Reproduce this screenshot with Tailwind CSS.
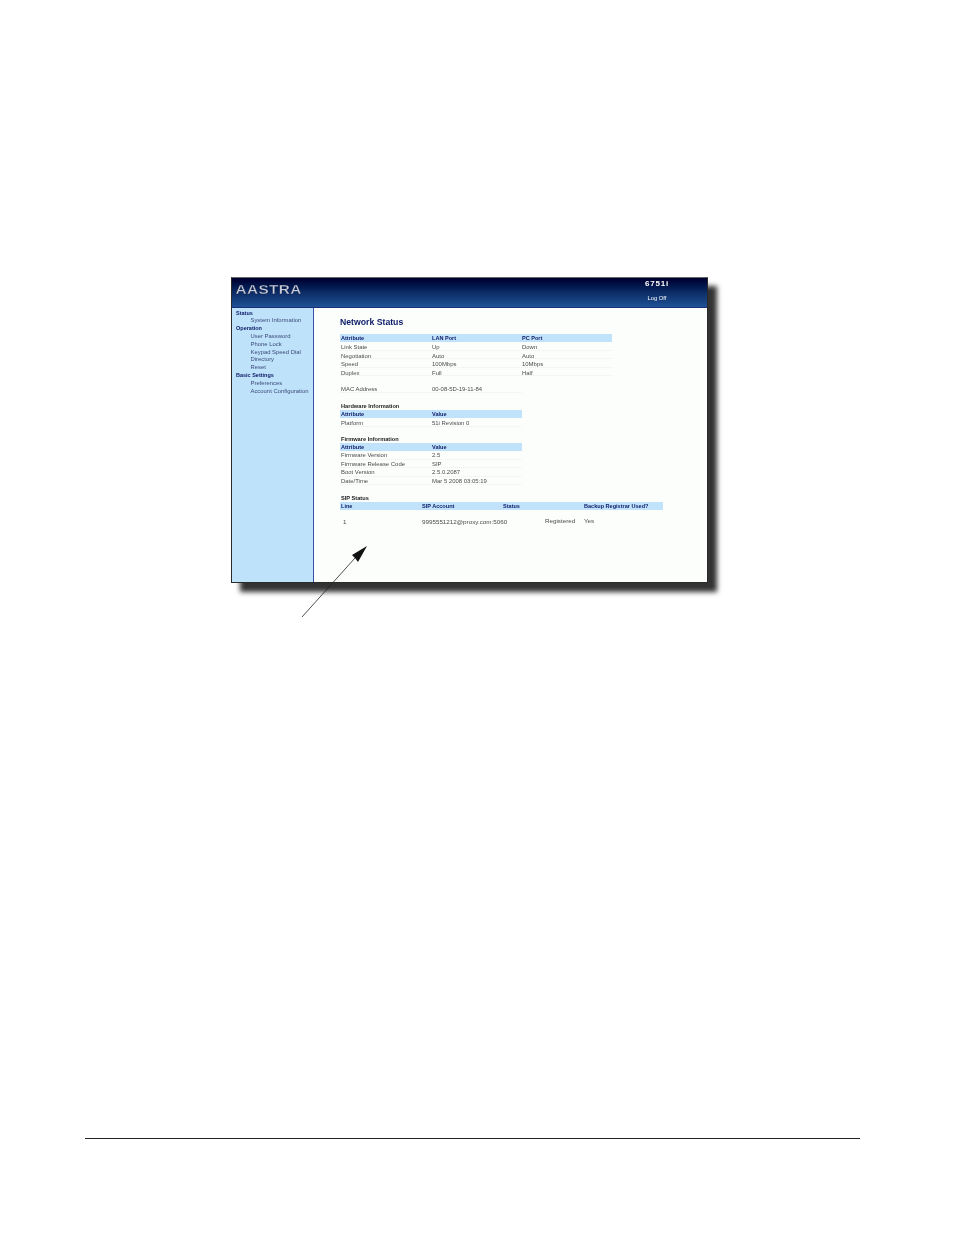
<!DOCTYPE html>
<html lang="en">
<head>
<meta charset="UTF-8">
<title>Network Status</title>
<script src="https://cdn.jsdelivr.net/npm/@tailwindcss/browser@4"></script>
</head>
<body class="bg-white font-['Liberation_Sans',Arial,sans-serif]">
<div class="w-[954px] h-[1235px] flex flex-col relative overflow-hidden">
  <!-- Figure -->
  <div class="pt-[277px] pl-[231px] h-[1138px]">
    <div class="w-[477px] h-[306px] border border-[#2a2a2a] border-t-[#666] bg-[#fcfefc] flex flex-col shadow-[9px_9px_5px_#333] blur-[0.3px]">
      <!-- Header -->
      <div class="h-[30px] flex justify-between shrink-0 bg-gradient-to-b from-[#00002e] via-[#0d2c66] to-[#1f5296] border-b border-[#1a2f7a] text-white">
        <div class="pl-[3px] pt-[5px] text-[13px] leading-[14px] tracking-[0.3px] font-bold scale-x-[1.18] origin-left text-[#c9ced8] [-webkit-text-stroke:0.3px_#0a1440]">AASTRA</div>
        <div class="w-[100px] flex flex-col items-center text-white">
          <div class="text-[8px] leading-[9px] font-bold tracking-[0.8px] pt-[1px]">6751i</div>
          <div class="text-[5.8px] leading-[7px] pt-[7px]">Log Off</div>
        </div>
      </div>
      <div class="flex flex-1 min-h-0">
        <!-- Sidebar -->
        <div class="w-[82px] bg-[#bfe2fb] border-r border-[#3a4fa8] pt-[1.5px] text-[5.9px] leading-[7.82px] text-[#3b4a78] shrink-0">
          <div class="pl-[4px] text-[5.5px] font-bold text-[#0b1a66]">Status</div>
          <div class="pl-[18.5px]">System Information</div>
          <div class="pl-[4px] text-[5.5px] font-bold text-[#0b1a66]">Operation</div>
          <div class="pl-[18.5px]">User Password</div>
          <div class="pl-[18.5px]">Phone Lock</div>
          <div class="pl-[18.5px]">Keypad Speed Dial</div>
          <div class="pl-[18.5px]">Directory</div>
          <div class="pl-[18.5px]">Reset</div>
          <div class="pl-[4px] text-[5.5px] font-bold text-[#0b1a66]">Basic Settings</div>
          <div class="pl-[18.5px]">Preferences</div>
          <div class="pl-[18.5px]">Account Configuration</div>
        </div>
        <!-- Main -->
        <div class="flex-1 pl-[26px] text-[5.95px] text-[#4a4a4a]">
          <div class="pt-[8px] h-[26px] text-[8.7px] leading-[12px] font-bold text-[#0b1a66]">Network Status</div>

          <div class="w-[272px]">
            <div class="grid grid-cols-[91px_90px_91px] h-[8px] leading-[8px] bg-[#c0e3fb] text-[5.55px] font-bold text-[#0b1a66] pl-[1px]"><span>Attribute</span><span>LAN Port</span><span>PC Port</span></div>
            <div class="grid grid-cols-[91px_90px_91px] h-[8.5px] leading-[10.5px] pl-[1px] border-b border-dotted border-[#eee]"><span>Link State</span><span>Up</span><span>Down</span></div>
            <div class="grid grid-cols-[91px_90px_91px] h-[8.5px] leading-[10px] pl-[1px] border-b border-dotted border-[#eee]"><span>Negotiation</span><span>Auto</span><span>Auto</span></div>
            <div class="grid grid-cols-[91px_90px_91px] h-[8.5px] leading-[10.5px] pl-[1px] border-b border-dotted border-[#eee]"><span>Speed</span><span>100Mbps</span><span>10Mbps</span></div>
            <div class="grid grid-cols-[91px_90px_91px] h-[8.5px] leading-[10px] pl-[1px] border-b border-dotted border-[#eee]"><span>Duplex</span><span>Full</span><span>Half</span></div>
          </div>

          <div class="w-[182px] mt-[8.5px] grid grid-cols-[91px_91px] h-[8.5px] leading-[8.5px] pl-[1px] border-b border-dotted border-[#eee]"><span>MAC Address</span><span>00-08-5D-19-11-84</span></div>

          <div class="w-[182px] mt-[8.5px]">
            <div class="h-[8.5px] leading-[8.5px] pl-[1px] text-[5.65px] font-bold text-[#222]">Hardware Information</div>
            <div class="grid grid-cols-[91px_91px] h-[8px] leading-[8px] bg-[#c0e3fb] text-[5.55px] font-bold text-[#0b1a66] pl-[1px]"><span>Attribute</span><span>Value</span></div>
            <div class="grid grid-cols-[91px_91px] h-[8.5px] leading-[10.5px] pl-[1px] border-b border-dotted border-[#eee]"><span>Platform</span><span>51i Revision 0</span></div>
          </div>

          <div class="w-[182px] mt-[8px]">
            <div class="h-[8.5px] leading-[8.5px] pl-[1px] text-[5.65px] font-bold text-[#222]">Firmware Information</div>
            <div class="grid grid-cols-[91px_91px] h-[8px] leading-[8px] bg-[#c0e3fb] text-[5.55px] font-bold text-[#0b1a66] pl-[1px]"><span>Attribute</span><span>Value</span></div>
            <div class="grid grid-cols-[91px_91px] h-[8.5px] leading-[9.5px] pl-[1px] border-b border-dotted border-[#eee]"><span>Firmware Version</span><span>2.5</span></div>
            <div class="grid grid-cols-[91px_91px] h-[8.5px] leading-[9.5px] pl-[1px] border-b border-dotted border-[#eee]"><span>Firmware Release Code</span><span>SIP</span></div>
            <div class="grid grid-cols-[91px_91px] h-[8.5px] leading-[9.5px] pl-[1px] border-b border-dotted border-[#eee]"><span>Boot Version</span><span>2.5.0.2087</span></div>
            <div class="grid grid-cols-[91px_91px] h-[8.5px] leading-[9.5px] pl-[1px] border-b border-dotted border-[#eee]"><span>Date/Time</span><span>Mar 5 2008 03:05:19</span></div>
          </div>

          <div class="w-[323px] mt-[8px]">
            <div class="h-[8.5px] leading-[10px] pl-[1px] text-[5.65px] font-bold text-[#222]">SIP Status</div>
            <div class="grid grid-cols-[81px_81px_81px_80px] h-[8px] leading-[8px] bg-[#c0e3fb] text-[5.55px] font-bold text-[#0b1a66] pl-[1px]"><span>Line</span><span>SIP Account</span><span>Status</span><span>Backup Registrar Used?</span></div>
            <div class="grid grid-cols-[82px_123px_39px_auto] mt-[8px] h-[8px] leading-[8px] text-[6.25px]"><span class="pl-[3px]">1</span><span>9995551212@proxy.com:5060</span><span class="-mt-[1px]">Registered</span><span class="-mt-[1px]">Yes</span></div>
          </div>
        </div>
      </div>
    </div>
  </div>

  <!-- Callout arrow -->
  <svg class="absolute left-[295px] top-[540px]" width="80" height="85" viewBox="0 0 80 85" fill="none">
    <line x1="7" y1="77" x2="60" y2="18" stroke="#222" stroke-width="0.8"/>
    <polygon points="72,6 63,22 60,18 57,15" fill="#111"/>
  </svg>

  <!-- Footer rule -->
  <div class="ml-[85px] w-[775px] border-t border-[#222]"></div>
</div>
</body>
</html>
